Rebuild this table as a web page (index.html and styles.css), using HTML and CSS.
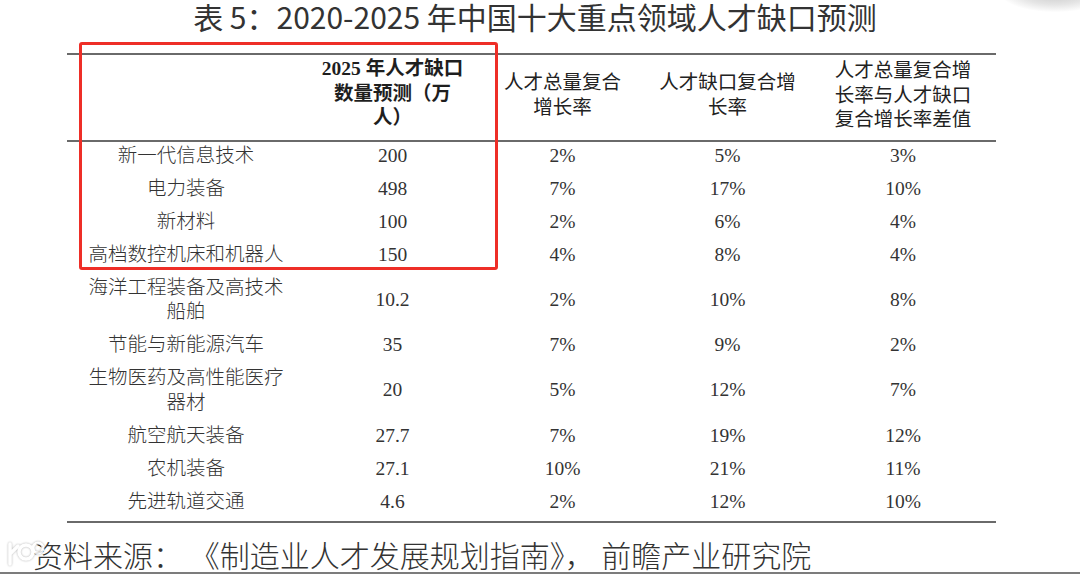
FILE: index.html
```html
<!DOCTYPE html>
<html lang="zh-CN">
<head>
<meta charset="utf-8">
<title>表 5：2020-2025 年中国十大重点领域人才缺口预测</title>
<link rel="stylesheet" href="styles.css">
</head>
<body>
<div class="page">
  <h1 class="title">表 5：2020-2025 年中国十大重点领域人才缺口预测</h1>
  <table class="data">
    <colgroup>
      <col class="c-name">
      <col class="c-num">
      <col class="c-rate">
      <col class="c-gap">
      <col class="c-diff">
    </colgroup>
    <thead>
      <tr>
        <th></th>
        <th class="strong">2025 年人才缺口<br>数量预测（万<br>人）</th>
        <th>人才总量复合<br>增长率</th>
        <th>人才缺口复合增<br>长率</th>
        <th>人才总量复合增<br>长率与人才缺口<br>复合增长率差值</th>
      </tr>
    </thead>
    <tbody>
      <tr><td>新一代信息技术</td><td>200</td><td>2%</td><td>5%</td><td>3%</td></tr>
      <tr><td>电力装备</td><td>498</td><td>7%</td><td>17%</td><td>10%</td></tr>
      <tr><td>新材料</td><td>100</td><td>2%</td><td>6%</td><td>4%</td></tr>
      <tr><td>高档数控机床和机器人</td><td>150</td><td>4%</td><td>8%</td><td>4%</td></tr>
      <tr><td>海洋工程装备及高技术<br>船舶</td><td>10.2</td><td>2%</td><td>10%</td><td>8%</td></tr>
      <tr><td>节能与新能源汽车</td><td>35</td><td>7%</td><td>9%</td><td>2%</td></tr>
      <tr><td>生物医药及高性能医疗<br>器材</td><td>20</td><td>5%</td><td>12%</td><td>7%</td></tr>
      <tr><td>航空航天装备</td><td>27.7</td><td>7%</td><td>19%</td><td>12%</td></tr>
      <tr><td>农机装备</td><td>27.1</td><td>10%</td><td>21%</td><td>11%</td></tr>
      <tr><td>先进轨道交通</td><td>4.6</td><td>2%</td><td>12%</td><td>10%</td></tr>
    </tbody>
  </table>
  <p class="source">资料来源： 《制造业人才发展规划指南》， 前瞻产业研究院</p>
  <div class="bottom-bar"></div>

  <div class="highlight"></div>
  <div class="corner-shadow"></div>
  <svg class="watermark" width="46" height="30" viewBox="0 0 46 30" aria-hidden="true">
    <path d="M6 6 L6 26 M6 16 L14 8" fill="none" stroke="#ffffff" stroke-width="3.5" stroke-linecap="round"/>
    <circle cx="22" cy="14" r="7" fill="none" stroke="#ffffff" stroke-width="3.5"/>
    <circle cx="34" cy="10" r="5" fill="none" stroke="#ffffff" stroke-width="3"/>
  </svg>
</div>
</body>
</html>
```

FILE: styles.css
```css
html, body {
  margin: 0;
  padding: 0;
  background: #ffffff;
}

.page {
  position: relative;
  width: 1080px;
  height: 574px;
  overflow: hidden;
  display: flex;
  flex-direction: column;
  background: #ffffff;
}

.title {
  margin: 0;
  padding-right: 10px;
  font-family: "Noto Sans CJK SC", "Noto Sans", sans-serif;
  font-weight: 400;
  font-size: 30px;
  line-height: 32px;
  color: #333333;
  text-align: center;
  white-space: nowrap;
}

.data {
  margin: 21px 0 0 67px;
  width: 929px;
  border-collapse: collapse;
  table-layout: fixed;
  font-family: "Liberation Serif", "Noto Sans CJK SC", serif;
  font-size: 19.5px;
  line-height: 24.5px;
  color: #333333;
  border-top: 2px solid #6a6a6a;
  border-bottom: 2px solid #6a6a6a;
}

.c-name { width: 238px; }
.c-num { width: 175px; }
.c-rate { width: 165px; }
.c-gap { width: 165px; }
.c-diff { width: 186px; }

.data th {
  padding: 2px 0 9px;
  font-family: "Noto Sans CJK SC", sans-serif;
  font-weight: 400;
  color: #222222;
  text-align: center;
  vertical-align: middle;
  border-bottom: 2px solid #6a6a6a;
}

.data th.strong {
  font-family: "Liberation Serif", "Noto Sans CJK SC", serif;
  font-weight: 700;
  color: #1e1e1e;
}

.data td {
  padding: 2px 0 6.5px;
  text-align: center;
  vertical-align: middle;
  font-weight: 300;
}

.source {
  margin: 14px 0 0 33px;
  font-family: "Noto Sans CJK SC", serif;
  font-weight: 300;
  font-size: 30px;
  line-height: 35px;
  color: #333333;
  white-space: nowrap;
}

.bottom-bar {
  margin-top: auto;
  height: 3px;
  background: #7c7c7c;
}

.highlight {
  position: absolute;
  left: 79px;
  top: 42px;
  width: 413px;
  height: 222px;
  border: 3px solid #ee2e27;
  border-radius: 3px;
}

.corner-shadow {
  position: absolute;
  right: -30px;
  top: -28px;
  width: 110px;
  height: 40px;
  border-radius: 50%;
  background: radial-gradient(ellipse at center, rgba(150,150,150,0.55) 0%, rgba(180,180,180,0.35) 45%, rgba(255,255,255,0) 72%);
}

.watermark {
  position: absolute;
  left: 4px;
  top: 538px;
  opacity: 0.85;
  filter: drop-shadow(0 0 1px rgba(0,0,0,0.35));
}
```
